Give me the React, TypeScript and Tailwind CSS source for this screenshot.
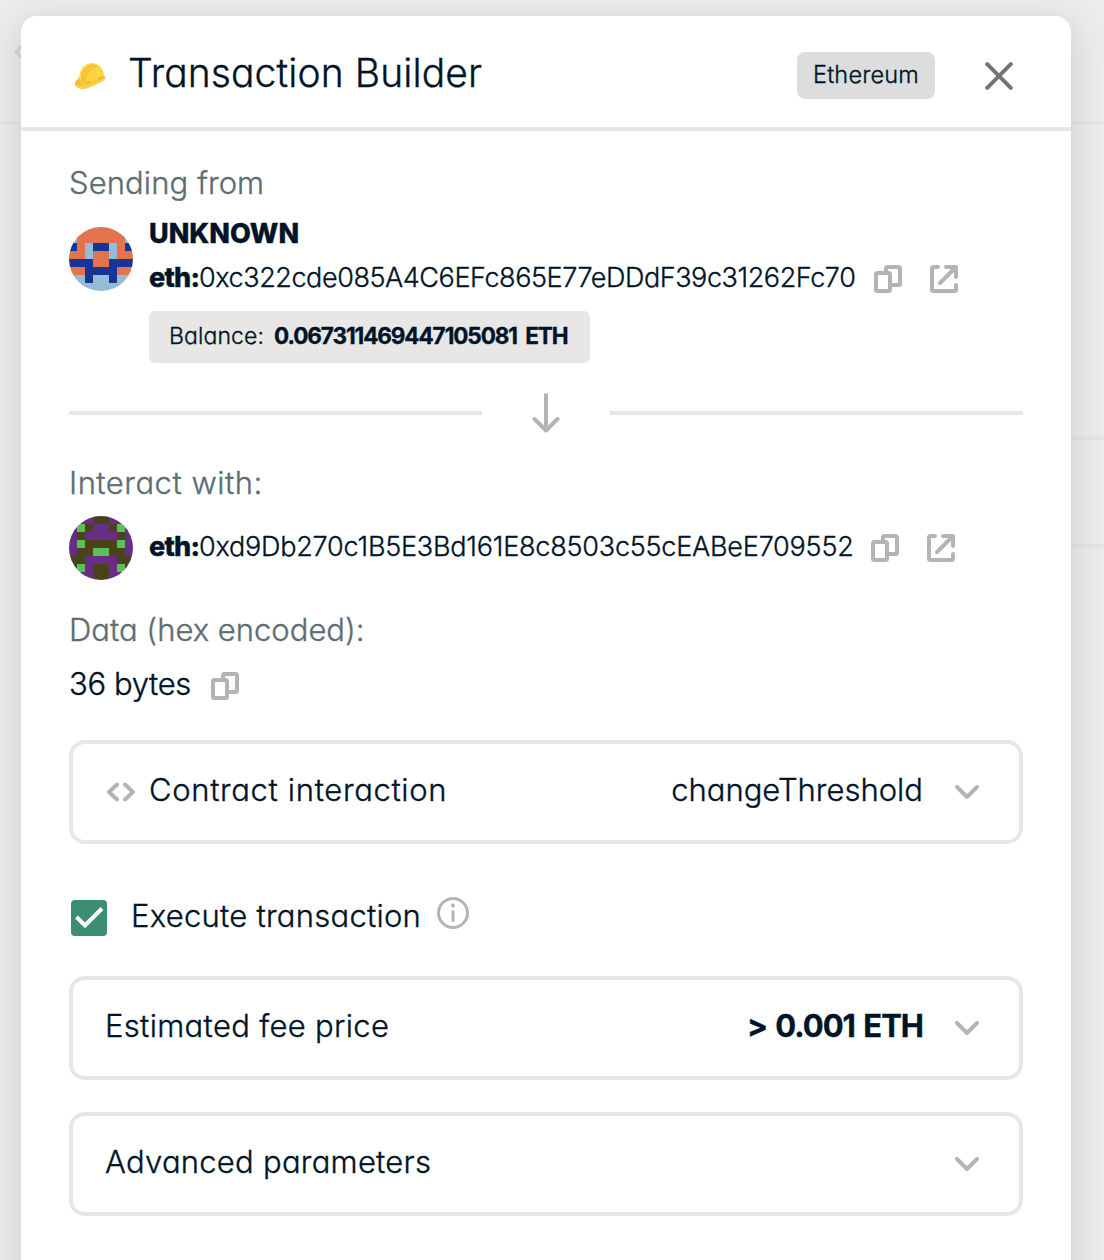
import type { ReactNode } from 'react';

const SENDER_CELLS = ['LOOOOOOL', 'LOOOOOOL', 'DOLDDLOD', 'OOLOOLOO', 'DDDOODDD', 'OODDDDOO', 'LLDLLDLL', 'LLLLLLLL'];
const CONTRACT_CELLS = ['PPPBBPPP', 'PGBPPBGP', 'PBPPPPBP', 'PGBBBBGP', 'PBBGGBBP', 'BBPPPPBB', 'BGPBBPGB', 'PPPBBPPP'];
const CELL_FILL: Record<string, string> = {
  L: 'fill-[#94bcd4]',
  O: 'fill-[#e2734d]',
  D: 'fill-[#163595]',
  P: 'fill-[#682d84]',
  G: 'fill-[#5cc05c]',
  B: 'fill-[#49431c]',
};

function Identicon({ cells }: { cells: string[] }) {
  return (
    <svg viewBox="0 0 8 8" className="size-16 shrink-0 rounded-full" shapeRendering="crispEdges">
      {cells.flatMap((row, y) =>
        row.split('').map((c, x) => <rect key={`${x}-${y}`} x={x} y={y} width="1" height="1" className={CELL_FILL[c]} />),
      )}
    </svg>
  );
}

const stroke = {
  fill: 'none',
  stroke: 'currentColor',
  strokeWidth: 4,
  strokeLinecap: 'round',
  strokeLinejoin: 'round',
} as const;

function CopyIcon() {
  return (
    <svg viewBox="0 0 28 28" className="size-7 shrink-0 text-[#b2b5b2]" {...stroke}>
      <rect x="2" y="8" width="14" height="18" rx="1.5" />
      <path d="M12 8V3.5A1.5 1.5 0 0 1 13.5 2H24.5A1.5 1.5 0 0 1 26 3.5V18.5A1.5 1.5 0 0 1 24.5 20H16" />
    </svg>
  );
}

function OpenIcon() {
  return (
    <svg viewBox="0 0 28 28" className="size-7 shrink-0 text-[#b2b5b2]" {...stroke}>
      <path d="M8 2H3.5A1.5 1.5 0 0 0 2 3.5V24.5A1.5 1.5 0 0 0 3.5 26H24.5A1.5 1.5 0 0 0 26 24.5V20" />
      <path d="M16 2H26V12" />
      <path d="M10 18L25 3" />
    </svg>
  );
}

function Chevron() {
  return (
    <svg viewBox="0 0 24 14" className="ml-8 h-3.5 w-6 shrink-0 translate-y-0.5 text-[#b2b5b2]" {...stroke}>
      <path d="M2 2L12 12L22 2" />
    </svg>
  );
}

function HardHat() {
  return (
    <svg viewBox="0 0 32 28" className="h-7 w-8 shrink-0">
      <path d="M0.8 21C2 18 4.500 17 6 14L28 13L31.500 14.800C32 17 29 19 26 20.400L13.500 26C8 28.200 1.500 25.600 0.800 22.500Z" fill="#f3bb3c" />
      <path d="M1 21C5 24 10 24 14 22.500L31 15.500C31 18 28 19.600 25 21L13.500 26C8 28.200 1.500 25.600 0.800 22.500Z" fill="#fbd03f" />
      <path d="M5.500 19C4.500 11 7.500 4.500 13.500 2C20 -0.200 26 2.500 28.500 8C29.600 10.500 30 12.500 30 14.500L14 22C10.500 23 7 22 5.500 19Z" fill="#fad53e" />
      <path d="M8.500 20.500C7.500 13 10.500 6 19 2.800M11 21C10 13 14 7 22.500 4" fill="none" stroke="#eead3a" strokeWidth="1.100" strokeLinecap="round" />
      <path d="M12.500 20.800L16.500 19.800M25 17L28.500 14.800" stroke="#f0ae37" strokeWidth="1.500" strokeLinecap="round" />
    </svg>
  );
}

function Label({ children, className = '' }: { children: ReactNode; className?: string }) {
  return <div className={`h-8 text-[31px] leading-8 text-[#5d6d74] ${className}`}>{children}</div>;
}

function Panel({ children, className = '' }: { children: ReactNode; className?: string }) {
  return (
    <div className={`flex h-[104px] items-center rounded-2xl border-4 border-[#e8e7e6] pr-10 pb-1 pl-8 text-[31px] leading-10 ${className}`}>
      {children}
    </div>
  );
}

export default function App() {
  return (
    <div className="relative h-[1260px] w-[1104px] overflow-hidden bg-[#edecea] px-[21px] pt-4 font-['Inter',sans-serif] font-light whitespace-nowrap text-[#001428] [-webkit-text-stroke:0.35px_currentColor] [font-feature-settings:'cv11']">
      <div className="absolute inset-x-0 top-[122px] h-0.5 bg-[#e5e4e2]" />
      <div className="absolute top-[436px] right-0 h-1 w-10 bg-[#e6e5e4]" />
      <div className="absolute top-[544px] right-0 h-1 w-10 bg-[#e6e5e4]" />
      <svg viewBox="0 0 12 20" className="absolute top-[42px] left-3.5 h-5 w-3 text-[#d6d6d4]" {...stroke} strokeWidth={3}>
        <path d="M9 3L2 10L9 17" />
      </svg>

      <main className="relative h-[1300px] w-[1050px] rounded-2xl bg-white shadow-[0_8px_36px_rgba(40,54,61,0.18)]">
        <header className="flex h-[115px] items-center border-b-4 border-[#e8e7e6] pr-[58px] pl-[53px]">
          <div className="mt-2">
            <HardHat />
          </div>
          <h1 className="mt-0.5 ml-[22px] text-[39px] leading-[48px] font-light tracking-[0.1px]">Transaction Builder</h1>
          <div className="mt-2 ml-auto flex h-[47px] w-[138px] items-center justify-center rounded-lg bg-[#dddddd] pb-px text-[23.5px] tracking-[0.2px]">
            Ethereum
          </div>
          <svg viewBox="0 0 28 28" className="mt-2 ml-[50px] size-7 text-[#747474]" {...stroke}>
            <path d="M2.2 2.2L25.8 25.8M25.8 2.2L2.2 25.8" />
          </svg>
        </header>

        <div className="px-12 pt-9">
          <Label className="tracking-[0.1px]">Sending from</Label>
          <section className="mt-3.5 flex">
            <div className="pt-3.5">
              <Identicon cells={SENDER_CELLS} />
            </div>
            <div className="ml-4">
              <div className="pt-px text-[27px] leading-10 font-extrabold">UNKNOWN</div>
              <div className="mt-1 flex h-10 items-center text-[27px] leading-10">
                <span className="w-[50px] font-extrabold tracking-[-0.8px]">eth:</span>
                <span className="w-[675px] tracking-[-0.43px]">0xc322cde085A4C6EFc865E77eDDdF39c31262Fc70</span>
                <div className="mt-0.5 flex gap-7">
                  <CopyIcon />
                  <OpenIcon />
                </div>
              </div>
              <div className="mt-[13px] flex h-[52px] w-[441px] items-center rounded-md bg-[#e8e7e6] pb-0.5 pl-5">
                <span className="w-[105px] text-[23px] tracking-[0.1px]">Balance:</span>
                <span className="text-[22.5px] font-bold tracking-[-1.08px] [word-spacing:4px]">0.067311469447105081 ETH</span>
              </div>
            </div>
          </section>

          <div className="mt-[30px] flex h-10 items-center">
            <div className="h-1 w-[413px] bg-[#e8e7e6]" />
            <svg viewBox="0 0 28 40" className="mx-[50px] h-10 w-7 text-[#b2b5b2]" {...stroke}>
              <path d="M14 2V37M2.5 26L14 37.5L25.5 26" />
            </svg>
            <div className="h-1 w-[413px] bg-[#e8e7e6]" />
          </div>

          <Label className="mt-[34px] tracking-[0.5px]">Interact with:</Label>
          <section className="mt-[17px] flex h-16 items-center">
            <Identicon cells={CONTRACT_CELLS} />
            <div className="mb-0.5 ml-4 flex items-center text-[27px] leading-10">
              <span className="w-[50px] font-extrabold tracking-[-0.8px]">eth:</span>
              <span className="w-[672px] tracking-[-0.22px]">0xd9Db270c1B5E3Bd161E8c8503c55cEABeE709552</span>
              <div className="mt-0.5 flex gap-7">
                <CopyIcon />
                <OpenIcon />
              </div>
            </div>
          </section>

          <Label className="mt-[34px]">Data (hex encoded):</Label>
          <div className="mt-[22px] flex h-8 items-center text-[31px] leading-8">
            <span className="w-[142px] tracking-[-0.35px]">36 bytes</span>
            <div className="mt-1">
              <CopyIcon />
            </div>
          </div>

          <Panel className="mt-10">
            <svg viewBox="0 0 32 20" className="mt-1 ml-0.5 h-5 w-8 text-[#b2b5b2]" {...stroke}>
              <path d="M10 2.5L2 10L10 17.5M18 2.5L26 10L18 17.5" />
            </svg>
            <span className="ml-2.5 tracking-[0.65px]">Contract interaction</span>
            <span className="ml-auto">changeThreshold</span>
            <Chevron />
          </Panel>

          <div className="mt-14 flex h-9 items-center pl-0.5">
            <div className="flex size-9 items-center justify-center rounded bg-[#3d8c74]">
              <svg viewBox="0 0 36 36" className="size-9 text-white" {...stroke} strokeLinecap="butt" strokeLinejoin="miter">
                <path d="M5.5 17L14 25.5L31 8.500" />
              </svg>
            </div>
            <span className="mb-1 ml-6 w-[306px] text-[31px] leading-8 tracking-[0.25px]">Execute transaction</span>
            <svg viewBox="0 0 32 32" className="mb-2.5 size-8 text-[#b2b5b2]" {...stroke} strokeWidth={3}>
              <circle cx="16" cy="16" r="14.5" />
              <path d="M16 14.5V23.5" />
              <circle cx="16" cy="8.5" r="2" fill="currentColor" stroke="none" />
            </svg>
          </div>

          <Panel className="mt-10">
            <span className="tracking-[0.32px]">Estimated fee price</span>
            <span className="ml-auto font-bold tracking-[-1px] [word-spacing:2px]">&gt; 0.001 ETH</span>
            <Chevron />
          </Panel>

          <Panel className="mt-8">
            <span className="tracking-[0.25px]">Advanced parameters</span>
            <span className="ml-auto" />
            <Chevron />
          </Panel>
        </div>
      </main>
    </div>
  );
}
